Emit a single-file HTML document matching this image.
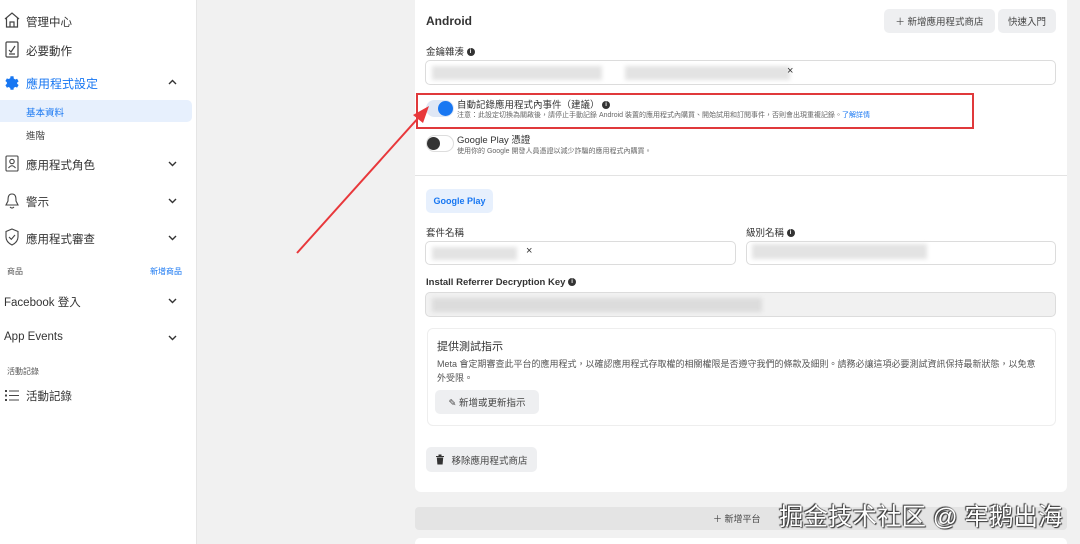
<!DOCTYPE html>
<html><head><meta charset="utf-8"><style>
*{margin:0;padding:0;box-sizing:border-box}
html,body{width:1080px;height:544px;overflow:hidden}
body{background:#f1f1f1;font-family:"Liberation Sans","Noto Sans CJK TC",sans-serif;color:#1c1e21;position:relative}
.a{position:absolute;white-space:nowrap}
#side{position:absolute;left:0;top:0;width:197px;height:544px;background:#fff;border-right:1px solid #e5e5e5}
.nav{font-size:11.5px;color:#333}
.card{position:absolute;background:#fff;border-radius:6px}
.inp{position:absolute;border:1px solid #dcdcdc;border-radius:5px;background:#fff}
.blur{position:absolute;background:#e3e3e3;filter:blur(2px)}
.btn{position:absolute;background:#eeeff1;border-radius:5px;font-size:9.5px;color:#444;display:flex;align-items:center;justify-content:center}
.lbl{font-size:9.5px;color:#333}
.i{display:inline-block;width:8px;height:8px;border-radius:50%;background:#333;color:#fff;font-size:6px;text-align:center;line-height:8px;font-weight:bold;vertical-align:middle}
</style></head><body>
<div id="side">
<svg class="a" style="left:4px;top:11px" width="16" height="18" viewBox="0 0 16 18" fill="none" stroke="#444" stroke-width="1.2"><path d="M1 8 L8 2 L15 8 M2.5 7 V16 H13.5 V7 M6 16 V11 H10 V16"/></svg>
<div class="a nav" style="left:26px;top:14px">管理中心</div>
<svg class="a" style="left:5px;top:41px" width="14" height="17" viewBox="0 0 14 17" fill="none" stroke="#444" stroke-width="1.2"><rect x="1" y="1" width="12" height="15" rx="1"/><path d="M4 9 L6 11 L10 5 M4 13 H10"/></svg>
<div class="a nav" style="left:26px;top:43px">必要動作</div>
<svg class="a" style="left:3px;top:74px" width="18" height="18" viewBox="0 0 24 24"><path fill="#1877f2" d="M12 8a4 4 0 100 8 4 4 0 000-8zm9.4 5.5l2-1.6-2-3.5-2.4.9a8 8 0 00-2-1.2L16.6 5h-4l-.4 2.6a8 8 0 00-2 1.2L7.8 7.9l-2 3.5 2 1.6a8 8 0 000 2.2l-2 1.6 2 3.5 2.4-.9a8 8 0 002 1.2l.4 2.4h4l.4-2.6a8 8 0 002-1.2l2.4.9 2-3.5-2-1.6a8 8 0 000-2.2z" transform="translate(-2.6 -2)"/></svg>
<div class="a nav" style="left:26px;top:75px;color:#1877f2;font-size:12px">應用程式設定</div>
<svg class="a" style="left:168px;top:79px" width="9" height="6" viewBox="0 0 9 6" fill="none" stroke="#333" stroke-width="1.4"><path d="M1 5 L4.5 1.5 L8 5"/></svg>
<div class="a" style="left:0;top:100px;width:192px;height:22px;background:#e7f0fd;border-radius:0 5px 5px 0"></div>
<div class="a" style="left:26px;top:105px;font-size:9.5px;color:#1877f2">基本資料</div>
<div class="a" style="left:26px;top:128px;font-size:9.5px;color:#444">進階</div>
<svg class="a" style="left:5px;top:155px" width="14" height="17" viewBox="0 0 14 17" fill="none" stroke="#444" stroke-width="1.1"><rect x="1" y="1" width="12" height="15" rx="1"/><circle cx="7" cy="6.5" r="2.2"/><path d="M3.5 13 Q7 8.5 10.5 13"/></svg>
<div class="a nav" style="left:26px;top:157px">應用程式角色</div>
<svg class="a" style="left:168px;top:161px" width="9" height="6" viewBox="0 0 9 6" fill="none" stroke="#333" stroke-width="1.4"><path d="M1 1 L4.5 4.5 L8 1"/></svg>
<svg class="a" style="left:4px;top:192px" width="16" height="18" viewBox="0 0 16 18" fill="none" stroke="#444" stroke-width="1.1"><path d="M8 2 C4 2 4 6 4 9 L2 13 H14 L12 9 C12 6 12 2 8 2 Z M6 15 Q8 17 10 15"/></svg>
<div class="a nav" style="left:26px;top:194px">警示</div>
<svg class="a" style="left:168px;top:198px" width="9" height="6" viewBox="0 0 9 6" fill="none" stroke="#333" stroke-width="1.4"><path d="M1 1 L4.5 4.5 L8 1"/></svg>
<svg class="a" style="left:4px;top:228px" width="16" height="18" viewBox="0 0 16 18" fill="none" stroke="#444" stroke-width="1.1"><path d="M8 1 L14 3.5 V9 C14 13 11 15.5 8 17 C5 15.5 2 13 2 9 V3.5 Z M5 9 L7.3 11.3 L11 7"/></svg>
<div class="a nav" style="left:26px;top:231px">應用程式審查</div>
<svg class="a" style="left:168px;top:235px" width="9" height="6" viewBox="0 0 9 6" fill="none" stroke="#333" stroke-width="1.4"><path d="M1 1 L4.5 4.5 L8 1"/></svg>
<div class="a" style="left:7px;top:266px;font-size:8px;color:#555">商品</div>
<div class="a" style="left:150px;top:266px;font-size:8px;color:#1877f2">新增商品</div>
<div class="a nav" style="left:4px;top:294px">Facebook 登入</div>
<svg class="a" style="left:168px;top:298px" width="9" height="6" viewBox="0 0 9 6" fill="none" stroke="#333" stroke-width="1.4"><path d="M1 1 L4.5 4.5 L8 1"/></svg>
<div class="a nav" style="left:4px;top:331px">App Events</div>
<svg class="a" style="left:168px;top:335px" width="9" height="6" viewBox="0 0 9 6" fill="none" stroke="#333" stroke-width="1.4"><path d="M1 1 L4.5 4.5 L8 1"/></svg>
<div class="a" style="left:7px;top:366px;font-size:8px;color:#555">活動記錄</div>
<svg class="a" style="left:5px;top:389px" width="14" height="13" viewBox="0 0 14 13" fill="#444"><rect x="0" y="1" width="2" height="2"/><rect x="0" y="5.5" width="2" height="2"/><rect x="0" y="10" width="2" height="2"/><rect x="4" y="1.5" width="10" height="1"/><rect x="4" y="6" width="10" height="1"/><rect x="4" y="10.5" width="10" height="1"/></svg>
<div class="a nav" style="left:26px;top:388px">活動記錄</div>
</div>

<div class="card" style="left:415px;top:-6px;width:652px;height:498px"></div>
<div class="a" style="left:415px;top:175px;width:652px;height:1px;background:#e3e3e3"></div>
<div class="a" style="left:426px;top:14px;font-size:12px;font-weight:bold;color:#333">Android</div>
<div class="btn" style="left:884px;top:9px;width:111px;height:24px">＋ 新增應用程式商店</div>
<div class="btn" style="left:998px;top:9px;width:58px;height:24px">快速入門</div>
<div class="a lbl" style="left:426px;top:44px">金鑰雜湊 <span class="i">i</span></div>
<div class="inp" style="left:425px;top:60px;width:631px;height:25px"></div>
<div class="blur" style="left:432px;top:66px;width:170px;height:14px"></div>
<div class="blur" style="left:625px;top:66px;width:165px;height:14px"></div>
<div class="a" style="left:787px;top:65px;font-size:11px;color:#333">×</div>

<div class="a" style="left:416px;top:93px;width:558px;height:36px;border:2px solid #e0393b"></div>
<div class="a" style="left:426px;top:100px;width:28px;height:17px;border-radius:9px;background:#dfe7f5"></div>
<div class="a" style="left:438px;top:101px;width:15px;height:15px;border-radius:50%;background:#1877f2"></div>
<div class="a" style="left:457px;top:97px;font-size:9.5px;color:#333">自動記錄應用程式內事件（建議） <span class="i">i</span></div>
<div class="a" style="left:457px;top:110px;font-size:7px;color:#666">注意：此設定切換為關啟後，請停止手動記錄 Android 裝置的應用程式內購買、開始試用和訂閱事件，否則會出現重複記錄。<span style="color:#1877f2">了解詳情</span></div>
<div class="a" style="left:426px;top:135px;width:28px;height:17px;border-radius:9px;background:#fff;border:1px solid #ddd"></div>
<div class="a" style="left:427px;top:137px;width:13px;height:13px;border-radius:50%;background:#333"></div>
<div class="a" style="left:457px;top:132px;font-size:9.5px;color:#333">Google Play 憑證</div>
<div class="a" style="left:457px;top:146px;font-size:7px;color:#666">使用你的 Google 開發人員憑證以減少詐騙的應用程式內購買。</div>

<div class="a" style="left:426px;top:189px;width:67px;height:24px;border-radius:5px;background:#e7f0fd;color:#1877f2;font-size:9px;font-weight:bold;text-align:center;line-height:24px">Google Play</div>
<div class="a lbl" style="left:426px;top:225px">套件名稱</div>
<div class="a lbl" style="left:746px;top:225px">級別名稱 <span class="i">i</span></div>
<div class="inp" style="left:425px;top:241px;width:311px;height:24px"></div>
<div class="blur" style="left:432px;top:247px;width:85px;height:13px"></div>
<div class="a" style="left:526px;top:245px;font-size:11px;color:#333">×</div>
<div class="inp" style="left:746px;top:241px;width:310px;height:24px"></div>
<div class="blur" style="left:752px;top:244px;width:175px;height:15px"></div>
<div class="a" style="left:426px;top:277px;font-size:9.5px;font-weight:bold;color:#333">Install Referrer Decryption Key <span class="i">i</span></div>
<div class="inp" style="left:425px;top:292px;width:631px;height:25px;background:#f1f1f1"></div>
<div class="blur" style="left:432px;top:298px;width:330px;height:14px;background:#dcdcdc"></div>
<div class="a" style="left:427px;top:328px;width:629px;height:98px;border:1px solid #eee;border-radius:6px"></div>
<div class="a" style="left:437px;top:338px;font-size:11px;color:#333">提供測試指示</div>
<div class="a" style="left:437px;top:357px;font-size:9px;color:#555;line-height:14px;white-space:normal;width:605px">Meta 會定期審查此平台的應用程式，以確認應用程式存取權的相關權限是否遵守我們的條款及細則。請務必讓這項必要測試資訊保持最新狀態，以免意外受限。</div>
<div class="btn" style="left:435px;top:390px;width:104px;height:24px">✎ 新增或更新指示</div>
<div class="btn" style="left:426px;top:447px;width:111px;height:25px"><svg width="10" height="11" viewBox="0 0 10 11" style="margin-right:6px"><path fill="#333" d="M1 2h8v1H1zM3.5 0.5h3v1.5h-3zM1.8 3.5h6.4l-.6 7H2.4z"/></svg>移除應用程式商店</div>

<div class="a" style="left:415px;top:507px;width:652px;height:23px;background:#e4e4e4;border-radius:4px"></div>
<div class="a" style="left:713px;top:512px;font-size:9px;color:#444">＋ 新增平台</div>
<div class="a" style="left:415px;top:538px;width:652px;height:10px;background:#fff;border-radius:5px"></div>
<div class="a" style="left:779px;top:498px;font-size:24.5px;color:#fff;text-shadow:0 0 1px #333,1px 1px 1px #333,-1px -1px 1px #333">掘金技术社区 @ 牢鹅出海</div>

<svg class="a" style="left:0;top:0" width="1080" height="544"><line x1="297" y1="253" x2="420" y2="116" stroke="#e8383b" stroke-width="2"/><polygon points="429,106 413,115 423,123" fill="#e8383b"/></svg>
</body></html>
